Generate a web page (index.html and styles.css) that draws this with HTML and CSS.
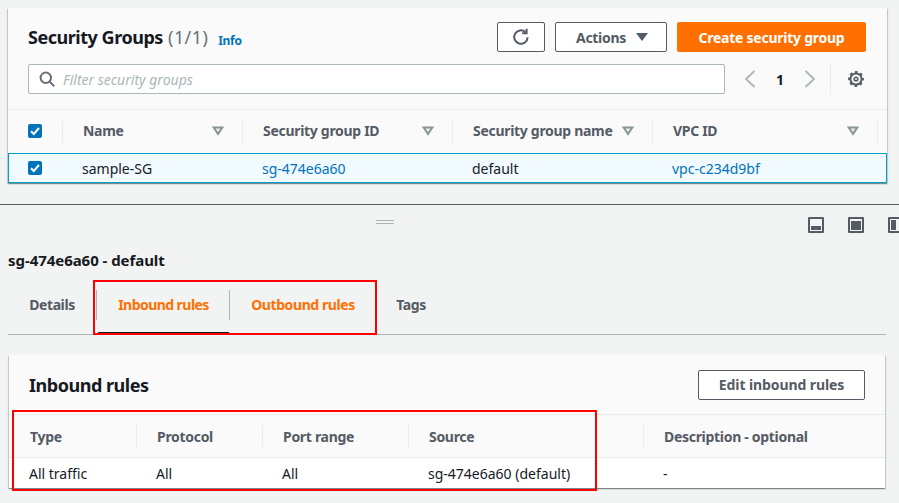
FILE: index.html
```html
<!DOCTYPE html>
<html lang="en">
<head>
    <meta charset="UTF-8">
    <meta name="viewport" content="width=device-width, initial-scale=1.0">
    <link rel="stylesheet" href="styles.css">
    <title>Security Groups</title>
</head>
<body>
    <div class="page">
        <section class="top-pane">
            <div class="card">
                <div class="card-head">
                    <div class="title-row">
                        <h1>Security Groups <span class="count">(1/1)</span></h1>
                        <a class="info">Info</a>
                        <div class="actions">
                            <button class="btn btn-icon" aria-label="Refresh">
                                <svg width="18" height="18" viewBox="0 0 18 18" fill="none" stroke="#545b64" stroke-width="2"><path d="M15.6 9.2a6.7 6.7 0 1 1-2.1-5"/><path d="M14.6 0.8v4.4h-4.4"/></svg>
                            </button>
                            <button class="btn btn-actions">Actions <span class="caret"></span></button>
                            <button class="btn btn-primary">Create security group</button>
                        </div>
                    </div>
                    <div class="filter-row">
                        <div class="filter">
                            <svg width="16" height="16" viewBox="0 0 16 16" fill="none" stroke="#687078" stroke-width="2"><circle cx="6.8" cy="6.8" r="5.2"/><path d="M10.6 10.6l4.6 4.6"/></svg>
                            <span class="placeholder">Filter security groups</span>
                        </div>
                        <div class="pager">
                            <svg width="12" height="18" viewBox="0 0 12 18" fill="none" stroke="#aab7b8" stroke-width="1.8"><path d="M10.500 1L2 9l8.500 8"/></svg>
                            <span class="page-num">1</span>
                            <svg width="12" height="18" viewBox="0 0 12 18" fill="none" stroke="#aab7b8" stroke-width="1.8"><path d="M1.500 1L10 9l-8.500 8"/></svg>
                        </div>
                        <div class="settings">
                            <svg width="18" height="18" viewBox="0 0 18 18" fill="none" stroke="#545b64"><circle cx="9" cy="9" r="5.600" stroke-width="2"/><circle cx="9" cy="9" r="7" stroke-width="1.800" stroke-dasharray="2.800 2.700" stroke-dashoffset="1.400"/><circle cx="9" cy="9" r="1.800" stroke-width="1.600"/></svg>
                        </div>
                    </div>
                </div>
                <div class="sg-table">
                    <div class="sg-row sg-header">
                        <div class="sg-cell sg-check"><span class="checkbox"><svg width="14" height="14" viewBox="0 0 14 14" fill="none" stroke="#fff" stroke-width="2"><path d="M3 7.200l2.800 2.800L11 4"/></svg></span></div>
                        <div class="sg-cell">Name <svg class="sort" width="12" height="10" viewBox="0 0 12 10" fill="#eaeded" stroke="#879596" stroke-width="2"><path d="M1.700 1.500h8.600L6 8z"/></svg></div>
                        <div class="sg-cell">Security group ID <svg class="sort" width="12" height="10" viewBox="0 0 12 10" fill="#eaeded" stroke="#879596" stroke-width="2"><path d="M1.700 1.500h8.600L6 8z"/></svg></div>
                        <div class="sg-cell">Security group name <svg class="sort" width="12" height="10" viewBox="0 0 12 10" fill="#eaeded" stroke="#879596" stroke-width="2"><path d="M1.700 1.500h8.600L6 8z"/></svg></div>
                        <div class="sg-cell">VPC ID <svg class="sort" width="12" height="10" viewBox="0 0 12 10" fill="#eaeded" stroke="#879596" stroke-width="2"><path d="M1.700 1.500h8.600L6 8z"/></svg></div>
                    </div>
                    <div class="sg-row sg-selected">
                        <div class="sg-cell sg-check"><span class="checkbox"><svg width="14" height="14" viewBox="0 0 14 14" fill="none" stroke="#fff" stroke-width="2"><path d="M3 7.200l2.800 2.800L11 4"/></svg></span></div>
                        <div class="sg-cell">sample-SG</div>
                        <div class="sg-cell"><a class="link">sg-474e6a60</a></div>
                        <div class="sg-cell">default</div>
                        <div class="sg-cell"><a class="link">vpc-c234d9bf</a></div>
                    </div>
                </div>
            </div>
        </section>

        <section class="bottom-pane">
            <div class="pane-tools">
                <div class="handle"></div>
                <div class="view-icons">
                    <span class="view-icon view-bottom"></span>
                    <span class="view-icon view-middle"></span>
                    <span class="view-icon view-side"></span>
                </div>
            </div>
            <h2 class="detail-title">sg-474e6a60 - default</h2>
            <div class="tabs">
                <div class="tab tab-details">Details</div>
                <div class="tab tab-inbound">Inbound rules</div>
                <div class="tab tab-outbound">Outbound rules</div>
                <div class="tab tab-tags">Tags</div>
            </div>
            <div class="card rules-card">
                <div class="rules-head">
                    <h3>Inbound rules</h3>
                    <button class="btn btn-edit">Edit inbound rules</button>
                </div>
                <div class="rules-row rules-header">
                    <div class="rules-cell col-type">Type</div>
                    <div class="rules-cell col-proto">Protocol</div>
                    <div class="rules-cell col-port">Port range</div>
                    <div class="rules-cell col-source">Source</div>
                    <div class="rules-cell col-desc">Description - optional</div>
                </div>
                <div class="rules-row rules-body">
                    <div class="rules-cell col-type">All traffic</div>
                    <div class="rules-cell col-proto">All</div>
                    <div class="rules-cell col-port">All</div>
                    <div class="rules-cell col-source">sg-474e6a60 (default)</div>
                    <div class="rules-cell col-desc">-</div>
                </div>
            </div>
        </section>

        <!-- red annotation boxes on top of the screenshot -->
        <div class="callout callout-tabs"></div>
        <div class="callout callout-table"></div>
    </div>
</body>
</html>
```

FILE: styles.css
```css
* {
    box-sizing: border-box;
}

body {
    margin: 0;
    background-color: #f2f3f3;
    font-family: "Noto Sans", Arial, sans-serif;
    font-size: 14px;
    color: #16191f;
}

h1, h2, h3 {
    margin: 0;
}

.page {
    position: relative;
    width: 899px;
    height: 503px;
    overflow: hidden;
}

.top-pane {
    height: 205px;
    padding: 8px 0 0 8px;
    border-bottom: 1px solid #545b64;
}

.card {
    width: 879px;
    background-color: #fafafa;
    box-shadow: 0 1px 1px 0 rgba(0, 28, 36, 0.3), 1px 1px 1px 0 rgba(0, 28, 36, 0.15), -1px 1px 1px 0 rgba(0, 28, 36, 0.15);
}

.card-head {
    height: 102px;
    padding: 14px 21px 0 20px;
    border-bottom: 1px solid #eaeded;
}

.title-row {
    display: flex;
    align-items: center;
    height: 30px;
}

h1 {
    font-size: 18px;
    font-weight: 700;
    line-height: 30px;
    letter-spacing: -0.47px;
}

.count {
    margin-left: 1px;
    font-weight: 400;
    letter-spacing: 0.4px;
    color: #687078;
}

.info {
    margin-left: 10px;
    margin-top: 7px;
    font-size: 12px;
    font-weight: 700;
    letter-spacing: -0.3px;
    color: #0073bb;
}

.actions {
    display: flex;
    gap: 10px;
    margin-left: auto;
}

.btn {
    display: flex;
    align-items: center;
    justify-content: center;
    height: 30px;
    padding: 0;
    background-color: #fff;
    border: 1px solid #545b64;
    border-radius: 2px;
    font-family: inherit;
    font-size: 14px;
    font-weight: 700;
    letter-spacing: -0.1px;
    color: #545b64;
}

.btn-icon {
    width: 48px;
}

.btn-actions {
    width: 112px;
    gap: 10px;
    padding-left: 2px;
    letter-spacing: -0.3px;
}

.caret {
    width: 0;
    height: 0;
    border-left: 6px solid transparent;
    border-right: 6px solid transparent;
    border-top: 8px solid #545b64;
}

.btn-primary {
    width: 189px;
    background-color: #ff7000;
    border-color: #ff7000;
    letter-spacing: -0.25px;
    color: #fff;
}

.btn-edit {
    width: 167px;
}

.filter-row {
    display: flex;
    align-items: center;
    margin-top: 12px;
    height: 30px;
}

.filter {
    display: flex;
    align-items: center;
    gap: 8px;
    width: 697px;
    height: 30px;
    padding-left: 10px;
    background-color: #fff;
    border: 1px solid #aab7b8;
    border-radius: 2px;
}

.placeholder {
    font-style: italic;
    color: #aab7b8;
}

.pager {
    display: flex;
    align-items: center;
    gap: 16px;
    width: 106px;
    height: 30px;
    padding-left: 19px;
    border-right: 1px solid #eaeded;
}

.page-num {
    width: 16px;
    text-align: center;
    font-weight: 700;
}

.settings {
    display: flex;
    padding-left: 16px;
}

.sg-row {
    display: flex;
    align-items: center;
}

.sg-header {
    height: 43px;
    font-weight: 700;
    letter-spacing: -0.3px;
    color: #545b64;
}

.sg-selected {
    height: 30px;
    background-color: #f1faff;
    border: 1px solid #00a1c9;
}

.sg-cell {
    display: flex;
    align-items: center;
    height: 22px;
    width: 210px;
    padding-left: 20px;
}

.sg-header .sg-cell {
    padding-bottom: 2px;
    border-right: 1px solid #eaeded;
}

.sg-cell:nth-child(1) {
    width: 55px;
}

.sg-cell:nth-child(2) {
    width: 180px;
}

.sg-cell:nth-child(4) {
    width: 200px;
}

.sg-cell:nth-child(5) {
    width: 225px;
}

.sg-selected .sg-cell {
    padding-left: 19px;
}

.sg-selected .sg-cell:nth-child(1) {
    width: 54px;
}

.checkbox {
    display: flex;
    width: 14px;
    height: 14px;
    background-color: #0073bb;
    border-radius: 2px;
}

.sort {
    margin-left: auto;
    margin-right: 18px;
}

.link {
    color: #0073bb;
}

.pane-tools {
    position: relative;
    height: 45px;
}

.handle {
    position: absolute;
    left: 376px;
    top: 15px;
    width: 18px;
    height: 4px;
    border-top: 1px solid #aab7b8;
    border-bottom: 1px solid #aab7b8;
}

.view-icons {
    position: absolute;
    left: 808px;
    top: 12px;
    display: flex;
    gap: 24px;
}

.view-icon {
    position: relative;
    display: block;
    flex-shrink: 0;
    width: 16px;
    height: 16px;
    border: 2px solid #545b64;
    border-radius: 1px;
}

.view-icon::after {
    content: "";
    position: absolute;
    background-color: #545b64;
}

.view-bottom::after {
    left: 1px;
    right: 1px;
    bottom: 1px;
    height: 4px;
}

.view-middle::after {
    left: 1px;
    right: 1px;
    top: 2px;
    bottom: 1px;
}

.view-side::after {
    left: 1px;
    top: 1px;
    bottom: 1px;
    width: 5px;
}

.detail-title {
    height: 20px;
    margin: 0 0 0 8px;
    font-size: 15px;
    font-weight: 700;
    line-height: 20px;
    letter-spacing: -0.05px;
}

.tabs {
    display: flex;
    width: 878px;
    height: 45px;
    margin: 20px 0 20px 8px;
    border-bottom: 1px solid #aab7b8;
    font-weight: 700;
    letter-spacing: -0.42px;
    color: #545b64;
}

.tab {
    position: relative;
    display: flex;
    align-items: center;
    justify-content: center;
    height: 30px;
    padding-bottom: 2px;
}

.tab-details {
    width: 88px;
}

.tab-inbound {
    width: 133px;
    padding-left: 2px;
    letter-spacing: -0.55px;
    color: #ff7000;
}

.tab-outbound {
    width: 148px;
    color: #ff7000;
}

.tab-tags {
    width: 68px;
}

/* separators left of the two middle tabs */
.tab-inbound::before,
.tab-outbound::before {
    content: "";
    position: absolute;
    left: 0;
    top: 0;
    bottom: 0;
    width: 1px;
    background-color: #aab7b8;
}

/* selected tab underline */
.tab-inbound::after {
    content: "";
    position: absolute;
    left: 2px;
    right: 0;
    top: 42px;
    height: 2px;
    background-color: #16191f;
}

.rules-card {
    width: 876px;
    margin-left: 9px;
}

.rules-head {
    display: flex;
    align-items: center;
    justify-content: space-between;
    height: 60px;
    padding: 0 20px;
    border-bottom: 1px solid #eaeded;
}

h3 {
    font-size: 18px;
    font-weight: 700;
    letter-spacing: -0.47px;
}

.rules-row {
    display: flex;
    align-items: center;
}

.rules-header {
    height: 43px;
    border-bottom: 1px solid #eaeded;
    font-weight: 700;
    letter-spacing: -0.3px;
    color: #545b64;
}

.rules-body {
    height: 30px;
    background-color: #fff;
}

.rules-cell {
    display: flex;
    align-items: center;
    height: 22px;
    padding-left: 20px;
}

.rules-header .rules-cell {
    border-right: 1px solid #eaeded;
}

.rules-header .col-type {
    padding-left: 21px;
}

.rules-body .rules-cell {
    padding-left: 19px;
}

.rules-body .col-type {
    padding-left: 20px;
}

.col-type {
    width: 128px;
}

.col-proto {
    width: 126px;
}

.col-port {
    width: 146px;
}

.col-source {
    width: 235px;
}

.col-desc {
    width: 241px;
}

.rules-header .col-desc {
    border-right: none;
}

.callout {
    position: absolute;
    border: 2px solid #ff0000;
}

.callout-tabs {
    left: 93px;
    top: 280px;
    width: 284px;
    height: 55px;
}

.callout-table {
    left: 12px;
    top: 410px;
    width: 585px;
    height: 81px;
}
```
